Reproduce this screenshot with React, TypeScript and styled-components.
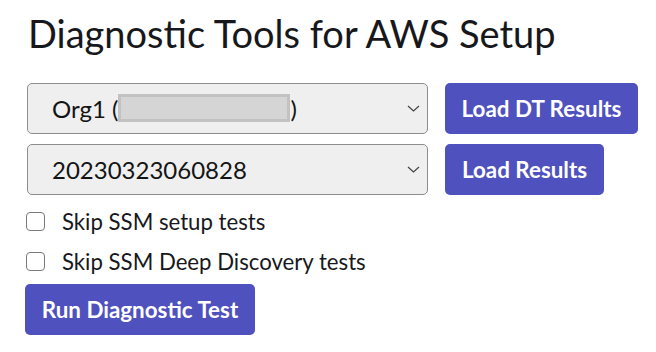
import React, { useState } from "react";
import styled, { createGlobalStyle } from "styled-components";

const Global = createGlobalStyle`
  html, body {
    margin: 0;
    padding: 0;
    background: #ffffff;
    font-family: Lato, "Noto Sans", sans-serif;
    color: #1b1b1f;
  }
`;

const Page = styled.div`
  padding: 11px 0 0 27px;
  display: flex;
  flex-direction: column;
`;

const Title = styled.h1`
  margin: 0 0 26px 1px;
  font-size: 38px;
  font-weight: 400;
  line-height: 1.2;
  color: #17181c;
  white-space: nowrap;
`;

const Controls = styled.div`
  display: flex;
  flex-direction: column;
  gap: 10px;
`;

const Row = styled.div`
  display: flex;
  align-items: center;
  gap: 17px;
`;

const SelectBox = styled.div`
  position: relative;
  flex-shrink: 0;
  box-sizing: border-box;
  width: 401px;
  height: 51px;
  display: flex;
  align-items: center;
  padding: 0 40px 0 24px;
  background: #efefef;
  border: 1px solid #8d8d8d;
  border-radius: 5px;
  font-size: 24px;
  color: #141414;
  white-space: nowrap;
`;

const Redacted = styled.span`
  display: inline-block;
  width: 166px;
  height: 22px;
  margin: 0;
  background: #d5d5d5;
  border: 3px solid #c2c2c2;
`;

const Chevron = styled.svg`
  position: absolute;
  right: 7px;
  top: 50%;
  margin-top: -3px;
`;

const Button = styled.button<{ $width: number }>`
  flex-shrink: 0;
  box-sizing: border-box;
  width: ${(p) => p.$width}px;
  height: 51px;
  padding: 0;
  border: none;
  border-radius: 5px;
  background: #4e51be;
  color: #ffffff;
  font-family: Lato, "Noto Sans", sans-serif;
  font-weight: 700;
  font-size: 22.4px;
  cursor: pointer;
  white-space: nowrap;
`;

const Checks = styled.div`
  display: flex;
  flex-direction: column;
  margin-top: 7px;
`;

const CheckRow = styled.label`
  display: flex;
  align-items: center;
  gap: 17px;
  height: 40px;
  font-size: 22.2px;
  color: #17181c;
`;

const Box = styled.input`
  appearance: none;
  box-sizing: border-box;
  width: 19px;
  height: 19px;
  margin: 0 0 0 -1px;
  border: 1.5px solid #7a7a7a;
  border-radius: 4px;
  background: #fff;
`;

const RunWrap = styled.div`
  margin-top: 2px;
  margin-left: -2px;
`;

const ChevronIcon = () => (
  <Chevron width="13" height="7" viewBox="0 0 13 7" fill="none">
    <path d="M1 1l5.5 5L12 1" stroke="#444" strokeWidth="1.2" />
  </Chevron>
);

export default function App() {
  const [skipSetup, setSkipSetup] = useState(false);
  const [skipDeep, setSkipDeep] = useState(false);

  return (
    <Page>
      <Global />
      <Title>Diagnostic Tools for AWS Setup</Title>
      <Controls>
        <Row>
          <SelectBox role="combobox">
            Org1 (<Redacted />)
            <ChevronIcon />
          </SelectBox>
          <Button $width={193}>Load DT Results</Button>
        </Row>
        <Row>
          <SelectBox role="combobox">
            20230323060828
            <ChevronIcon />
          </SelectBox>
          <Button $width={159}>Load Results</Button>
        </Row>
      </Controls>
      <Checks>
        <CheckRow>
          <Box type="checkbox" checked={skipSetup} onChange={() => setSkipSetup(!skipSetup)} />
          Skip SSM setup tests
        </CheckRow>
        <CheckRow>
          <Box type="checkbox" checked={skipDeep} onChange={() => setSkipDeep(!skipDeep)} />
          Skip SSM Deep Discovery tests
        </CheckRow>
      </Checks>
      <RunWrap>
        <Button $width={230}>Run Diagnostic Test</Button>
      </RunWrap>
    </Page>
  );
}
